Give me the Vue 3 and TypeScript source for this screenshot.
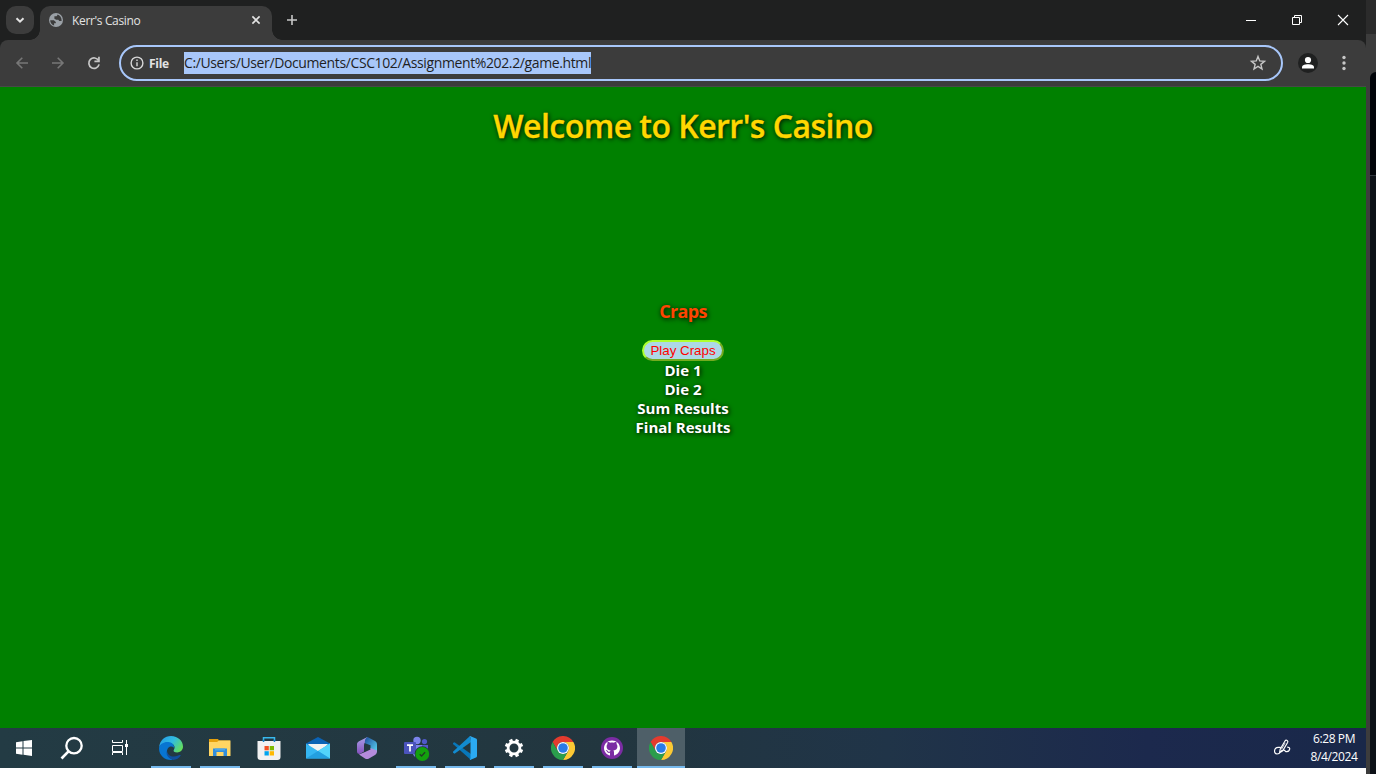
<script setup lang="ts">
interface TaskItem { id: string; running: boolean; active?: boolean }

const tasks: TaskItem[] = [
  { id: 'edge', running: true },
  { id: 'files', running: true },
  { id: 'store', running: false },
  { id: 'mail', running: false },
  { id: 'office', running: false },
  { id: 'teams', running: true },
  { id: 'code', running: true },
  { id: 'settings', running: true },
  { id: 'chrome', running: true },
  { id: 'github', running: true },
  { id: 'chrome', running: true, active: true },
]
const results: string[] = ['Die 1', 'Die 2', 'Sum Results', 'Final Results']
const teeth: number[] = [22.5, 67.5, 112.5, 157.5, 202.5, 247.5, 292.5, 337.5]
</script>

<template>
  <div class="screen">
    <div class="desktop">
      <div class="browser">
        <header class="tabstrip">
          <button class="tab-search" aria-label="Search tabs">
            <svg width="28" height="28" viewBox="0 0 28 28"><path d="M10.5 12.2 14 15.7l3.5-3.5" fill="none" stroke="#e3e3e3" stroke-width="2" /></svg>
          </button>
          <div class="tab">
            <svg class="globe" width="16" height="16" viewBox="0 0 16 16">
              <circle cx="8" cy="8" r="7" fill="#9aa0a6" />
              <path d="M2.2 8.200h3.600l2 1.800v1.300H6.100v2.200C3.700 12.800 2.200 10.800 2.200 8.200zM6.400 5.500V4.300h1.500c.9 0 1.500-.8 1.500-1.800C11.800 3.200 13.600 5.400 13.600 8c0 .4 0 .7-.1 1h-2.200l-1-1.200H8.200L6.400 6.700z" fill="#3c3c3c" />
            </svg>
            <span class="tab-title">Kerr's Casino</span>
            <svg class="tab-close" width="16" height="16" viewBox="0 0 16 16"><path d="m4.400 4.400 7.200 7.200m0-7.200-7.200 7.200" stroke="#e3e3e3" stroke-width="1.600" /></svg>
          </div>
          <svg class="new-tab" width="20" height="20" viewBox="0 0 20 20"><path d="M10 5v10M5 10h10" stroke="#c7c7c7" stroke-width="1.600" /></svg>
          <div class="window-controls">
            <svg viewBox="0 0 46 40"><path d="M18 20.500h10" stroke="#fff" /></svg>
            <svg viewBox="0 0 46 40"><path d="M18.500 17.500h7v7h-7zM20.500 17.500v-2h7v7h-2" fill="none" stroke="#fff" /></svg>
            <svg viewBox="0 0 46 40"><path d="m18 15 10 10m0-10L18 25" stroke="#fff" stroke-width="1.100" /></svg>
          </div>
        </header>

        <nav class="toolbar">
          <svg class="nav-icon" viewBox="0 0 36 36"><path d="M28 18H17m5.300-5.300L17 18l5.300 5.300" fill="none" stroke="#777" stroke-width="1.600" /></svg>
          <svg class="nav-icon" viewBox="0 0 36 36"><path d="M16 18h11m-5.300-5.300L27 18l-5.300 5.300" fill="none" stroke="#777" stroke-width="1.600" /></svg>
          <svg class="nav-icon" viewBox="0 0 36 36"><path d="M26.600 15.600a5.200 5.200 0 1 0 .5 3.800" fill="none" stroke="#c7c7c7" stroke-width="1.700" /><path d="M27.800 11.800v5.400h-5.400v-1.700h3.700v-3.700z" fill="#c7c7c7" /></svg>
          <div class="address">
            <svg class="info" width="14" height="14" viewBox="0 0 14 14"><circle cx="7" cy="7" r="5.900" fill="none" stroke="#d8d8d8" stroke-width="1.400" /><path d="M7 6.300v4M7 3.500V5" stroke="#d8d8d8" stroke-width="1.400" /></svg>
            <span class="scheme">File</span>
            <span class="url">C:/Users/User/Documents/CSC102/Assignment%202.2/game.html</span>
            <svg class="star" width="18" height="18" viewBox="0 0 18 18"><path d="m9 2.500 1.750 4.450 4.750.35-3.650 3.050 1.150 4.650L9 12.450 5 15l1.150-4.650L2.500 7.300l4.750-.35z" fill="none" stroke="#c7c7c7" stroke-width="1.400" /></svg>
          </div>
          <svg class="profile" width="20" height="20" viewBox="0 0 20 20"><circle cx="10" cy="10" r="10" fill="#1f2020" /><circle cx="10" cy="7" r="3.100" fill="#fff" /><path d="M4 15.500v-1.300C4 12 7.200 11.200 10 11.200s6 .8 6 3v1.300z" fill="#fff" /></svg>
          <svg class="menu" width="6" height="18" viewBox="0 0 6 18"><g fill="#c7c7c7"><circle cx="3" cy="3.500" r="1.700" /><circle cx="3" cy="9" r="1.700" /><circle cx="3" cy="14.500" r="1.700" /></g></svg>
        </nav>

        <main class="page">
          <h1>Welcome to Kerr's Casino</h1>
          <section class="game">
            <h3>Craps</h3>
            <button class="play">Play Craps</button>
            <div v-for="label in results" :key="label" class="result">{{ label }}</div>
          </section>
        </main>
      </div>

      <footer class="taskbar">
        <div class="system-item"><svg viewBox="0 0 48 40"><path d="m16 14.300 6.500-1v6.200H16zm7.500-1.200 8.500-1.200v7.600h-8.500zM16 20.500h6.500v6.200l-6.500-.9zm7.500 0H32V28l-8.500-1.200z" fill="#fff" /></svg></div>
        <div class="system-item"><svg viewBox="0 0 48 40"><circle cx="26" cy="17.700" r="7.700" fill="none" stroke="#fff" stroke-width="2.300" /><path d="M20.500 23.400 13.500 30.500" stroke="#fff" stroke-width="2.700" /></svg></div>
        <div class="system-item"><svg viewBox="0 0 48 40"><path d="M16.500 12v2.500h10V12M16.500 27v-2.500h10V27M16.500 17.500h10v6h-10zM30.500 12v15" fill="none" stroke="#fff" /><path d="M29 16h3v3h-3z" fill="#fff" /></svg></div>

        <div v-for="(task, index) in tasks" :key="index" :class="['task', { running: task.running, active: task.active }]">
          <svg v-if="task.id === 'edge'" viewBox="0 0 24 24">
            <defs><linearGradient id="edgeTop" x1="0" x2="1" y1=".2" y2=".7"><stop stop-color="#249de6" /><stop offset=".5" stop-color="#32bce0" /><stop offset="1" stop-color="#65df57" /></linearGradient></defs>
            <path d="M.2 11C.8 4.600 5.700 0 12 0c7 0 12 5.200 12 10.500 0 4-3 5.900-5.800 5.900-2.900 0-4.100-1.200-3.500-2.200 2.500-3.600-.4-7.200-5-7.200-4.600 0-8 1.500-9.500 4z" fill="url(#edgeTop)" />
            <path d="M.1 11.500C1.100 8 5 5.600 9.500 6.100c3.300.4 5.800 2.500 5.500 5.600C12.400 8.800 8 11.200 8 15.300c0 4 2.700 7.200 6 8.500C6.500 25.200-.7 19 .1 11.500z" fill="#0875d1" />
            <path d="M8 14.500c-.1 5 5.800 7.400 10.500 5.300 1.600-.7 2.600-1 3.300-.3-1.700 2.700-4.500 4.200-7.500 4.400C9.500 22.600 6.300 18.700 8 14.500z" fill="#104f9e" />
          </svg>
          <svg v-else-if="task.id === 'files'" viewBox="0 0 24 24"><path d="M1 3h9l1 1.500h11V7H1z" fill="#e5a00c" /><path d="M1 6h8l2-1.500h11.500v15.500H1z" fill="#ffd563" /><path d="M5 20v-7.500h14V20h-3.500v-4h-7v4z" fill="#318ddb" /><path d="M7 12.500h10v2H7z" fill="#4aa6ea" /></svg>
          <svg v-else-if="task.id === 'store'" viewBox="0 0 24 24"><path d="M6.500 6V1.700h11V6" fill="none" stroke="#38b9ee" stroke-width="1.500" /><path d="M.5 5h23v16a3 3 0 0 1-3 3h-17a3 3 0 0 1-3-3z" fill="#f1f1f1" /><path d="M5.800 6V3.800h1.500V6zM16.700 6V3.800h1.500V6z" fill="#1684c9" /><path d="M7.500 10h4.300v4.300H7.500z" fill="#f25022" /><path d="M12.700 10H17v4.300h-4.300z" fill="#7fba00" /><path d="M7.500 15.200h4.300v4.300H7.500z" fill="#00a4ef" /><path d="M12.700 15.200H17v4.300h-4.300z" fill="#ffb900" /></svg>
          <svg v-else-if="task.id === 'mail'" viewBox="0 0 24 24"><path d="M0 7.500 12 1l12 6.500v7H0z" fill="#0b63b5" /><path d="M2 8h20l-8 9H8z" fill="#f2f2f2" /><path d="m0 7.500 12 7.500 12-7.500v15H0z" fill="#35b6f1" /><path d="m12 15 12-7.500v15z" fill="#52d4fb" /><path d="M0 22.500 12 15l12 7.500z" fill="#239fdf" /></svg>
          <svg v-else-if="task.id === 'office'" viewBox="0 0 24 24">
            <defs><linearGradient id="officeA" x2="0" y2="1"><stop stop-color="#aaa1e8" /><stop offset="1" stop-color="#8450bd" /></linearGradient><linearGradient id="officeB" x2="1" y2="1"><stop stop-color="#1d4c9c" /><stop offset="1" stop-color="#5dd8f4" /></linearGradient></defs>
            <path d="M12.500 1 4 5.200C2.500 6 2 7 2 8.500v7c0 1.700 1.200 2.500 2.700 2.500L9 15.500V9.200c0-2 1-3 2-4z" fill="url(#officeA)" />
            <path d="M12.500 1 20 5c1.500.8 2 1.900 2 3.500v8L15.500 13V9.200L10 7.300C9.500 4.500 10.200 2.300 12.500 1z" fill="url(#officeB)" />
            <path d="M4 18.500 10 16l5.500-2.500V12l6.500 2.500c0 2.500-.5 3.500-2 4.500l-6 3.500c-1.300.8-2.700.8-4 0z" fill="#b48bdc" />
          </svg>
          <svg v-else-if="task.id === 'teams'" class="teams" viewBox="0 0 26 24">
            <circle cx="13" cy="4.500" r="3.700" fill="#7b83eb" /><circle cx="20.500" cy="5.600" r="2.600" fill="#5059c9" /><path d="M9 9h10v8c0 6-10 6-10 0z" fill="#7b83eb" /><path d="M18 9h6v6c0 4-6 4-6 0z" fill="#5059c9" /><rect y="6" width="12" height="12" rx="1" fill="#4b53bc" /><path d="M3 9.200h6M6 9v6.500" stroke="#fff" stroke-width="1.700" />
            <circle cx="18.300" cy="18" r="7.700" fill="#233943" /><circle cx="18.300" cy="18" r="6.900" fill="#13a10e" /><path d="m15.700 18.200 1.900 1.800 3.500-3.700" fill="none" stroke="#213b25" stroke-width="1.300" />
          </svg>
          <svg v-else-if="task.id === 'code'" viewBox="0 0 24 24"><path d="M1.500 6.200 18 18v6L.3 8.200c-.5-.5-.4-1 0-1.400z" fill="#0877b9" /><path d="M1.500 17.800.2 16.800c-.4-.5-.4-1 0-1.400L17 0l1 6z" fill="#128bd0" /><path d="M17 0 23 2.500c.6.3 1 .8 1 1.500v16c0 .7-.4 1.200-1 1.500L17 24c-.7-.1.500-1 .5-2V2c0-1-1.200-1.900-.5-2z" fill="#2baaf2" /></svg>
          <svg v-else-if="task.id === 'settings'" viewBox="0 0 24 24"><circle cx="12" cy="12" r="5.900" fill="none" stroke="#fff" stroke-width="2.800" /><g fill="#fff"><rect v-for="angle in teeth" :key="angle" x="10.300" y="2.800" width="3.400" height="3.500" :transform="`rotate(${angle} 12 12)`" /></g></svg>
          <svg v-else-if="task.id === 'chrome'" viewBox="0 0 24 24"><path d="M1.600 6a12 12 0 0 1 20.800 0H12a6 6 0 0 0-5.200 9z" fill="#e33b2e" /><path d="M22.400 6A12 12 0 0 1 12 24l5.200-9A6 6 0 0 0 12 6z" fill="#fcc934" /><path d="M12 24A12 12 0 0 1 1.600 6l5.200 9a6 6 0 0 0 10.400 0z" fill="#2a9d4c" /><circle cx="12" cy="12" r="6" fill="#fff" /><circle cx="12" cy="12" r="4.800" fill="#297be8" /></svg>
          <svg v-else viewBox="0 0 24 24"><circle cx="12" cy="12" r="11" fill="#7b2ca3" /><path d="M12 4.400c-4.500 0-8 3.400-8 7.700 0 3.500 2.200 6.300 5.300 7.300.5.100.7-.2.700-.6v-2c-2.200.4-2.800-.6-3.200-1.500-.3-.7-.7-1-1.100-1.300.9-.3 1.600.4 2 1 .6.900 1.300 1 2.300.6.100-.6.300-.9.600-1.100-2.800-.4-4-1.700-4-4 0-1 .3-1.800.9-2.400-.2-.8-.2-1.600.2-2.400.9.100 1.700.5 2.400 1 .9-.2 2.900-.2 3.800 0 .7-.5 1.500-.9 2.400-1 .4.800.4 1.600.2 2.400.6.600.9 1.400.9 2.400 0 2.300-1.200 3.600-4 4 .4.400.6 1 .6 1.800v2.500c0 .4.200.7.700.6C17.800 18.400 20 15.600 20 12.100c0-4.300-3.500-7.700-8-7.700z" fill="#fff" /></svg>
        </div>

        <svg class="pen" width="20" height="20" viewBox="0 0 20 20"><path d="M7.500 9.300H5.200C.8 9.300.3 15.800 4 16c4.500 0 2.500-3.800 6.500-3.800 2.200 0 1.500 1.700 3.300 1.500 1.500-.2 3-1.500 2.900-3.500-.1-1.100-1.200-1.100-2.500-1.100M6.500 14.800l.7-3.600L12 3c1.100-1.700 3.600-.3 2.600 1.500L9.700 12.700z" fill="none" stroke="#fff" stroke-width="1.200" /><path d="m8.500 11.300 3.700-6.500" stroke="#fff" stroke-width=".8" /></svg>
        <div class="clock"><span>6:28 PM</span><span class="date">8/4/2024</span></div>
      </footer>
    </div>
    <aside class="edge-strip"><div class="other-window"></div></aside>
  </div>
</template>

<style>
body { background: #fff; overflow: hidden; }
</style>

<style scoped>
* { box-sizing: border-box; }
.screen { width: 1376px; height: 774px; display: flex; overflow: hidden; font-family: "Open Sans", "Noto Sans", sans-serif; }
.desktop { width: 1366px; height: 774px; background: #fff; }
.browser { height: 728px; display: flex; flex-direction: column; background: #1f2020; }
.tabstrip { height: 40px; display: flex; padding-left: 6px; background: #1f2020; }
.tab-search { width: 28px; height: 28px; margin-top: 6px; padding: 0; border: 0; border-radius: 10px; background: #3c3c3c; }
.tab { position: relative; width: 232px; height: 34px; margin: 6px 0 0 6px; padding: 0 8px; display: flex; align-items: center; background: #3c3c3c; border-radius: 10px 10px 0 0; }
.tab::before, .tab::after { content: ""; position: absolute; width: 10px; height: 10px; bottom: 0; }
.tab::before { left: -10px; background: radial-gradient(circle at 0 0, transparent 9.5px, #3c3c3c 10px); }
.tab::after { right: -10px; background: radial-gradient(circle at 100% 0, transparent 9.5px, #3c3c3c 10px); }
.globe, .tab-close { margin-bottom: 6px; }
.tab-title { margin: 0 0 4px 8px; color: #e3e3e3; font-size: 12px; line-height: 16px; letter-spacing: -.35px; white-space: nowrap; }
.tab-close { margin-left: auto; }
.new-tab { margin: 10px 0 0 10px; }
.window-controls { display: flex; margin-left: auto; }
.window-controls svg { width: 46px; height: 40px; }
.toolbar { height: 47px; display: flex; align-items: center; background: #3c3c3c; border-radius: 8px 8px 0 0; border-bottom: 1px solid #484848; }
.nav-icon { width: 36px; height: 36px; }
.address { width: 1164px; height: 36px; margin-left: 11px; padding: 0 14px 0 9px; display: flex; align-items: center; border: 2px solid #a8c7fa; border-radius: 18px; background: #3c3c3c; }
.scheme { width: 35px; margin-left: 5px; color: #e3e3e3; font-size: 12px; font-weight: 700; letter-spacing: -.3px; }
.url { width: 407px; height: 22px; background: #a8c7fa; color: #1f1f1f; font-size: 14px; line-height: 22px; letter-spacing: -.38px; white-space: nowrap; }
.star { margin-left: auto; }
.profile { margin-left: 15px; }
.menu { margin-left: 23px; }
.page { flex: 1; display: flex; flex-direction: column; align-items: center; background: #008000; font-weight: 700; text-align: center; }
h1 { height: 42px; margin: 18px 0 0; color: #ffd700; font-size: 32px; line-height: 42px; font-weight: 600; letter-spacing: -.53px; -webkit-text-stroke: .3px #ffd700; text-shadow: 1px 1px 5px #000; }
.game { margin-top: 152px; display: flex; flex-direction: column; align-items: center; }
h3 { height: 24px; margin: 0 0 17px; color: #ff4500; font-size: 18px; line-height: 24px; font-weight: 700; letter-spacing: -.7px; text-shadow: 1px 1px 5px #000; }
.play { width: 82px; height: 21px; padding: 0; border: 2px outset #adff2f; border-radius: 11px; background: #add8e6; color: #f00; font: 13.333px/17px "Liberation Sans", Arial, sans-serif; }
.result { height: 19px; color: #fff; font-size: 15px; line-height: 19px; text-shadow: 1px 1px 5px #000; }
.taskbar { width: 1366px; height: 40px; display: flex; background: linear-gradient(90deg, #233b44 0%, #22363f 45%, #203448 65%, #1c294d 84%, #192849 100%); }
.system-item { width: 48px; height: 40px; }
.system-item svg { width: 48px; height: 40px; }
.task { width: 48px; height: 40px; margin-right: 1px; padding-top: 8px; display: flex; flex-wrap: wrap; justify-content: center; }
.system-item + .task { margin-left: 3px; }
.task svg { width: 24px; height: 24px; }
.task .teams { width: 26px; margin-left: 2px; overflow: visible; }
.task.running::after { content: ""; width: 40px; height: 2px; margin-top: 6px; background: #76b9ed; }
.task.active { background: #4e5f68; }
.task.active::after { width: 48px; }
.pen { margin: 10px 0 0 auto; }
.clock { width: 56px; margin: 2px 4px 0 13px; display: flex; flex-direction: column; align-items: center; color: #fff; font-size: 12px; line-height: 18px; letter-spacing: -.4px; white-space: nowrap; }
.edge-strip { width: 10px; height: 774px; padding: 72px 0 0 4px; background: linear-gradient(#2b2b2b 0 34px, #3c3c3c 34px); }
.other-window { height: 702px; border-radius: 8px 0 0; background: linear-gradient(#010409 0 103px, #30363d 103px 104px, #0d1117 104px); }
</style>
